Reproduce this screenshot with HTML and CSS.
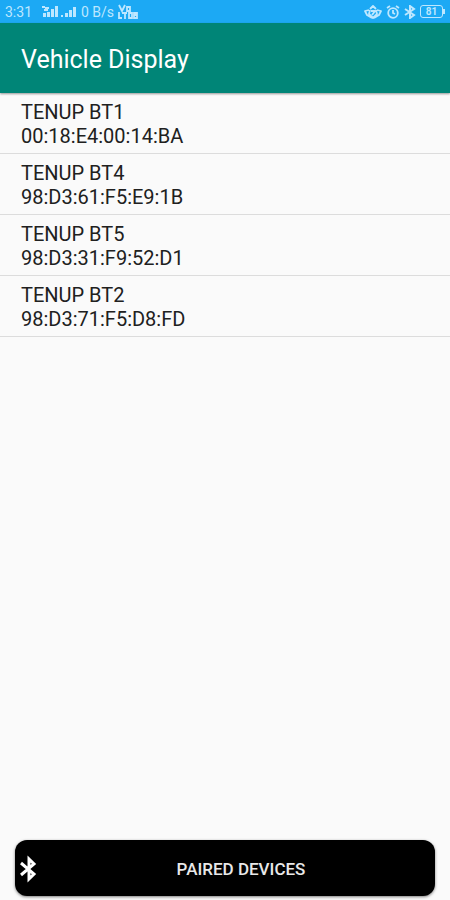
FILE: index.html
```html
<!DOCTYPE html>
<html lang="en">
<head>
<meta charset="utf-8">
<meta name="viewport" content="width=device-width, initial-scale=1">
<title>Vehicle Display</title>
<link rel="stylesheet" href="styles.css">
</head>
<body>
<div class="status">
  <span class="time">3:31</span>
  <svg class="signal" width="37" height="14" viewBox="0 0 37 14" fill="currentColor" aria-hidden="true">
    <path d="M1 1h3v2H1zM4 2h4v2H4zM3 4h4v2H3zM2 8h3v4H2zM6 7h3v5H6zM10 4h3v8h-3zM14 1h3v11h-3z"/>
    <path d="M20 10h2v2h-2zM24 8h3v4h-3zM28 5h3v7h-3zM32 2h3v10h-3z"/>
  </svg>
  <span class="speed">0 B/s</span>
  <svg class="volte" width="21" height="16" viewBox="0 0 21 16" fill="none" stroke="currentColor" stroke-width="1.8" aria-hidden="true">
    <path d="M2 1l3 6 3-6M10 3h3v4h-3zM2 8v6h3M5 9h5M8 9v6M12 9v5h3V9zM17 9h3v5h-3zM17 11h3"/>
  </svg>
  <div class="tray">
    <svg width="18" height="14" viewBox="0 0 18 14" fill="none" stroke="currentColor" stroke-width="1.8" stroke-linejoin="round" aria-hidden="true">
      <path d="M6 4l3-3 3 3M5 5L1 6l2 4 5 3M13 5l4 1-2 4-5 3M6 5l-1 4 4 4 4-4-1-4M7 6h4l-3 4"/>
    </svg>
    <svg width="14" height="14" viewBox="0 0 14 14" fill="none" stroke="currentColor" stroke-width="1.8" aria-hidden="true">
      <circle cx="7" cy="8" r="4.8"/><path d="M7 5v3l2 1M1 3l3-2M13 3l-3-2"/>
    </svg>
    <svg width="12" height="14" viewBox="0 0 12 14" fill="none" stroke="currentColor" stroke-width="2" aria-hidden="true">
      <path d="M1 4l9 6-4 3V1l4 3-9 6"/>
    </svg>
    <span class="battery">81</span>
  </div>
</div>
<header class="appbar"><h1>Vehicle Display</h1></header>
<main>
  <ul class="devices">
    <li><span>TENUP BT1</span><span>00:18:E4:00:14:BA</span></li>
    <li><span>TENUP BT4</span><span>98:D3:61:F5:E9:1B</span></li>
    <li><span>TENUP BT5</span><span>98:D3:31:F9:52:D1</span></li>
    <li><span>TENUP BT2</span><span>98:D3:71:F5:D8:FD</span></li>
  </ul>
</main>
<footer>
  <button class="paired" type="button">
    <svg width="18" height="28" viewBox="0 0 18 28" fill="none" stroke="#fff" stroke-width="3" aria-hidden="true">
      <path d="M2 8l13 11-5 5V4l5 5L2 20"/>
    </svg>
    <span>PAIRED DEVICES</span>
  </button>
</footer>
</body>
</html>
```
FILE: styles.css
```css
* { box-sizing: border-box; }
body {
  margin: 0;
  min-height: 100vh;
  display: flex;
  flex-direction: column;
  background: #fafafa;
  color: #202020;
  font-family: Roboto, sans-serif;
}
.status {
  display: flex;
  align-items: center;
  height: 23px;
  padding: 0 7px 0 5px;
  background: #1ca9f4;
  color: #bde7ff;
  font-size: 14px;
  line-height: 24px;
}
.signal { margin-left: 9px; }
.speed { margin-left: 3px; }
.volte { margin-left: 3px; }
.tray {
  display: flex;
  align-items: center;
  gap: 4px;
  margin-left: auto;
}
.battery {
  position: relative;
  width: 23px;
  height: 13px;
  border: 1px solid currentColor;
  border-radius: 3px;
  font-size: 10px;
  font-weight: 700;
  line-height: 11px;
  text-align: center;
}
.battery::after {
  content: "";
  position: absolute;
  top: 3px;
  right: -3px;
  width: 2px;
  height: 5px;
  background: currentColor;
}
.appbar {
  display: flex;
  align-items: center;
  height: 70px;
  padding: 2px 21px 0;
  background: #008577;
  color: #fff;
  box-shadow: 0 1px 2px rgba(0, 0, 0, 0.4);
}
.appbar h1 {
  margin: 0;
  font-size: 25px;
  font-weight: 400;
}
main { flex: 1; }
.devices {
  margin: 0;
  padding: 0;
  list-style: none;
}
.devices li {
  display: flex;
  flex-direction: column;
  padding: 7px 21px 5px;
  border-bottom: 1px solid #dcdcdc;
  font-size: 20px;
  line-height: 24px;
}
footer { padding: 0 15px 4px; }
.paired {
  display: flex;
  align-items: center;
  gap: 10px;
  width: 100%;
  height: 56px;
  padding: 2px 0 0 4px;
  border: 0;
  border-radius: 12px;
  background: #000;
  color: #e8e8e8;
  box-shadow: 0 1px 3px rgba(0, 0, 0, 0.5);
  font: 500 17px/24px Roboto, sans-serif;
}
.paired span {
  flex: 1;
  text-align: center;
}
```
